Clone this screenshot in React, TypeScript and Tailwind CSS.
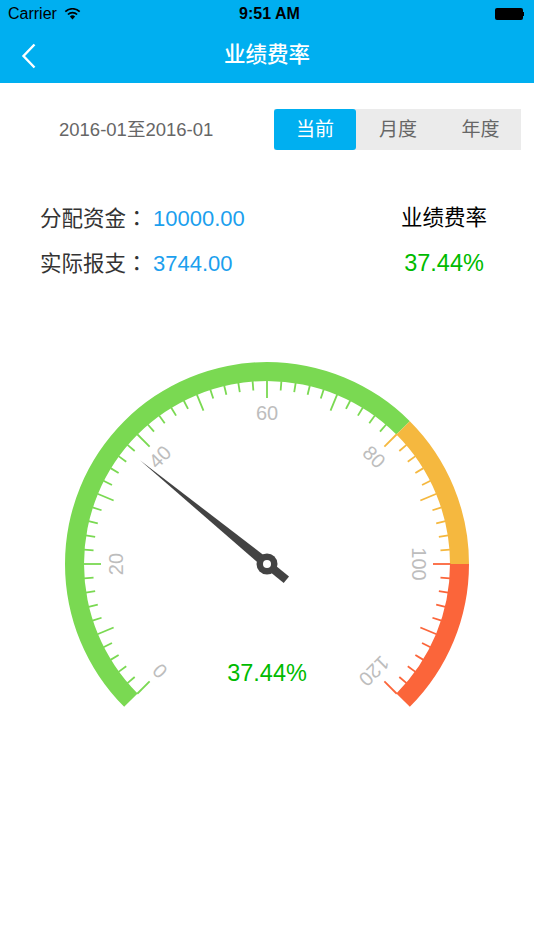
const CX = 267;
const CY = 564;
const R_OUT = 202;
const R_IN = 183;

function pt(r: number, deg: number): [number, number] {
  const a = (deg * Math.PI) / 180;
  return [CX + r * Math.cos(a), CY - r * Math.sin(a)];
}

function arc(from: number, to: number) {
  const [x1, y1] = pt(R_OUT, from);
  const [x2, y2] = pt(R_OUT, to);
  const [x3, y3] = pt(R_IN, to);
  const [x4, y4] = pt(R_IN, from);
  const large = from - to > 180 ? 1 : 0;
  return `M${x1} ${y1}A${R_OUT} ${R_OUT} 0 ${large} 1 ${x2} ${y2}L${x3} ${y3}A${R_IN} ${R_IN} 0 ${large} 0 ${x4} ${y4}Z`;
}

const GREEN = "#7ad952";
const ORANGE = "#f5b83f";
const RED = "#fb653a";

function Gauge() {
  const ticks = [];
  for (let i = 0; i <= 60; i++) {
    const v = i * 2;
    const deg = 225 - v * 2.25;
    const major = i % 5 === 0;
    const [x1, y1] = pt(R_IN + 0.5, deg);
    const [x2, y2] = pt(R_IN - (major ? 17 : 9), deg);
    const c = v >= 100 ? RED : v >= 80 ? ORANGE : GREEN;
    ticks.push(<line key={i} x1={x1} y1={y1} x2={x2} y2={y2} stroke={c} strokeWidth={1.8} />);
  }
  const labels = [0, 20, 40, 60, 80, 100, 120].map((v) => {
    const deg = 225 - v * 2.25;
    const [x, y] = pt(151.5, deg);
    return (
      <text
        key={v}
        x={x}
        y={y}
        textAnchor="middle"
        dominantBaseline="central"
        fontSize={20}
        fill="#bdbdbd"
        fontFamily="'Liberation Sans', sans-serif"
        transform={`rotate(${90 - deg} ${x} ${y})`}
      >
        {v}
      </text>
    );
  });
  const ang = 225 - 37.44 * 2.25;
  const [tx, ty] = pt(164, ang);
  const [bx1, by1] = pt(5, ang + 90);
  const [bx2, by2] = pt(5, ang - 90);
  const w = 4.2;
  const [ex, ey] = pt(25, ang + 180);
  const perp = ((ang + 90) * Math.PI) / 180;
  const px = w * Math.cos(perp);
  const py = -w * Math.sin(perp);
  return (
    <svg width="534" height="400" viewBox="0 340 534 400" className="block mt-[63px] w-[534px] h-[400px]">
      <path d={arc(225, 45)} fill={GREEN} />
      <path d={arc(45, 0)} fill={ORANGE} />
      <path d={arc(0, -45)} fill={RED} />
      {ticks}
      {labels}
      <polygon points={`${tx},${ty} ${bx1},${by1} ${bx2},${by2}`} fill="#434343" />
      <polygon
        points={`${CX + px},${CY + py} ${ex + px},${ey + py} ${ex - px},${ey - py} ${CX - px},${CY - py}`}
        fill="#434343"
      />
      <circle cx={CX} cy={CY} r={10.5} fill="#434343" />
      <circle cx={CX} cy={CY} r={4} fill="#fff" />
      <text
        x={CX}
        y={681}
        textAnchor="middle"
        fontSize={23.5}
        fill="#00bb00"
        fontFamily="'Liberation Sans', sans-serif"
      >
        37.44%
      </text>
    </svg>
  );
}

export default function App() {
  return (
    <div className="relative w-[534px] h-[950px] bg-white overflow-hidden font-['Liberation_Sans','Noto_Sans_CJK_SC',sans-serif]">
      <header className="h-[83px] bg-[#00aff0] flex flex-col">
        <div className="h-[28px] relative flex items-center justify-between pl-[8px] pr-[10px] text-black">
          <div className="flex items-center gap-[7px] text-[16px]">
            <span>Carrier</span>
            <svg width="17" height="12" viewBox="0 0 17 12">
              <path d="M8.5 11.5 5.9 8.6a3.7 3.7 0 0 1 5.2 0Z" fill="#000" />
              <path d="M3.9 6.5a6.6 6.6 0 0 1 9.2 0" stroke="#000" strokeWidth="1.7" fill="none" />
              <path d="M1.3 3.7a10.3 10.3 0 0 1 14.4 0" stroke="#000" strokeWidth="1.7" fill="none" />
            </svg>
          </div>
          <span className="absolute left-[5px] right-0 text-center text-[16px] font-bold">9:51 AM</span>
          <div className="flex items-center">
            <div className="w-[28px] h-[12px] bg-black rounded-[2px]" />
            <div className="w-[1.5px] h-[4px] bg-black" />
          </div>
        </div>
        <div className="relative flex-1 flex items-center justify-center pb-[1px]">
          <svg className="absolute left-[21px] top-[15px]" width="16" height="26" viewBox="0 0 16 26">
            <path d="M13.5 1.5 2.5 13l11 11.5" stroke="#fff" strokeWidth="2.4" fill="none" />
          </svg>
          <span className="text-white text-[21.5px] font-medium">业绩费率</span>
        </div>
      </header>

      <section className="flex pt-[26px] pl-[59px] pr-[13px] items-center justify-between">
        <span className="text-[18.5px] text-[#666]">2016-01至2016-01</span>
        <div className="w-[247px] h-[41px] bg-[#ebebeb] flex text-[19px] text-[#666]">
          <div className="w-[82px] pt-[2px] rounded-[3px] bg-[#00aff0] text-white flex items-center justify-center">当前</div>
          <div className="w-[84px] pt-[2px] flex items-center justify-center">月度</div>
          <div className="w-[81px] pt-[2px] flex items-center justify-center">年度</div>
        </div>
      </section>

      <section className="flex pt-[54px] pl-[40px] pr-[47px] justify-between">
        <div className="flex flex-col gap-[17px]">
          <div className="h-[28px] flex items-center">
            <span className="text-[#333] text-[21.5px] w-[113px]">
              分配资金<span className="font-['Noto_Sans_CJK_TC',sans-serif]">：</span>
            </span>
            <span className="text-[#1c9fee] text-[22px]">10000.00</span>
          </div>
          <div className="h-[28px] flex items-center">
            <span className="text-[#333] text-[21.5px] w-[113px]">
              实际报支<span className="font-['Noto_Sans_CJK_TC',sans-serif]">：</span>
            </span>
            <span className="text-[#1c9fee] text-[22px]">3744.00</span>
          </div>
        </div>
        <div className="flex flex-col gap-[17px] items-center">
          <div className="h-[28px] flex items-center text-black text-[21.5px]">业绩费率</div>
          <div className="h-[28px] pt-[2px] flex items-center text-[#00bb00] text-[23.5px]">37.44%</div>
        </div>
      </section>

      <Gauge />
    </div>
  );
}
